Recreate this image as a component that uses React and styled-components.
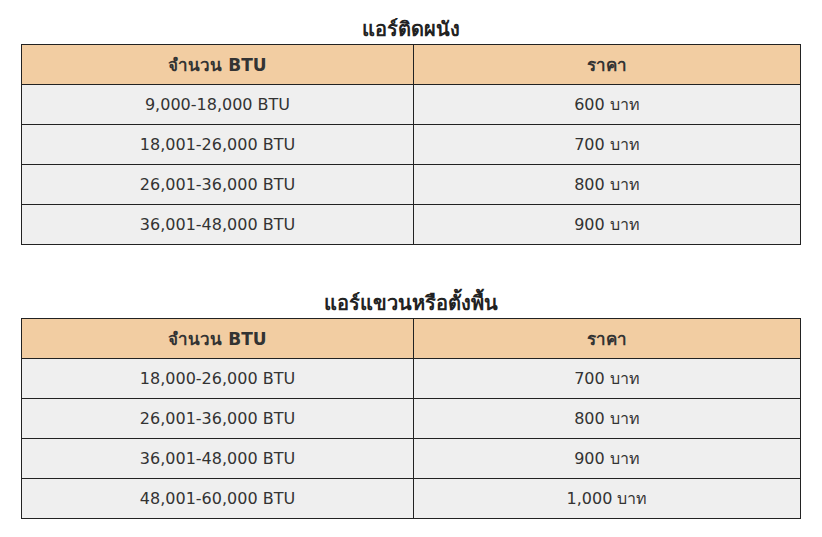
import React from 'react';
import styled, { createGlobalStyle } from 'styled-components';

const GlobalStyle = createGlobalStyle`
  html, body {
    margin: 0;
    padding: 0;
    background: #ffffff;
  }
  body {
    font-family: "DejaVu Sans", Tahoma, "Noto Sans", sans-serif;
    color: #333333;
  }
`;

const Page = styled.div`
  padding: 18px 21px 0 21px;
  display: flex;
  flex-direction: column;
  gap: 47px;
`;

const Section = styled.section`
  display: flex;
  flex-direction: column;
`;

const Title = styled.h2`
  margin: 0 0 4px 0;
  text-align: center;
  font-size: 20px;
  line-height: 22px;
  font-weight: bold;
  color: #222222;
`;

const Table = styled.table`
  width: 780px;
  border-collapse: collapse;
  table-layout: fixed;
  border: 1px solid #222222;
`;

const HeadCell = styled.th`
  height: 39px;
  padding: 0;
  background: #f2cda2;
  border: 1px solid #222222;
  font-size: 17px;
  font-weight: bold;
  color: #333333;
  text-align: center;
  vertical-align: middle;
`;

const Cell = styled.td`
  height: 39px;
  padding: 0;
  background: #efefef;
  border: 1px solid #222222;
  font-size: 16px;
  color: #333333;
  text-align: center;
  vertical-align: middle;
`;

const wallUnits = [
  ['9,000-18,000 BTU', '600 บาท'],
  ['18,001-26,000 BTU', '700 บาท'],
  ['26,001-36,000 BTU', '800 บาท'],
  ['36,001-48,000 BTU', '900 บาท'],
];

const ceilingUnits = [
  ['18,000-26,000 BTU', '700 บาท'],
  ['26,001-36,000 BTU', '800 บาท'],
  ['36,001-48,000 BTU', '900 บาท'],
  ['48,001-60,000 BTU', '1,000 บาท'],
];

function PriceTable({ title, rows }) {
  return (
    <Section>
      <Title>{title}</Title>
      <Table>
        <colgroup>
          <col style={{ width: '392px' }} />
          <col />
        </colgroup>
        <thead>
          <tr>
            <HeadCell>จำนวน BTU</HeadCell>
            <HeadCell>ราคา</HeadCell>
          </tr>
        </thead>
        <tbody>
          {rows.map(([btu, price]) => (
            <tr key={btu}>
              <Cell>{btu}</Cell>
              <Cell>{price}</Cell>
            </tr>
          ))}
        </tbody>
      </Table>
    </Section>
  );
}

export default function App() {
  return (
    <>
      <GlobalStyle />
      <Page>
        <PriceTable title="แอร์ติดผนัง" rows={wallUnits} />
        <PriceTable title="แอร์แขวนหรือตั้งพื้น" rows={ceilingUnits} />
      </Page>
    </>
  );
}
